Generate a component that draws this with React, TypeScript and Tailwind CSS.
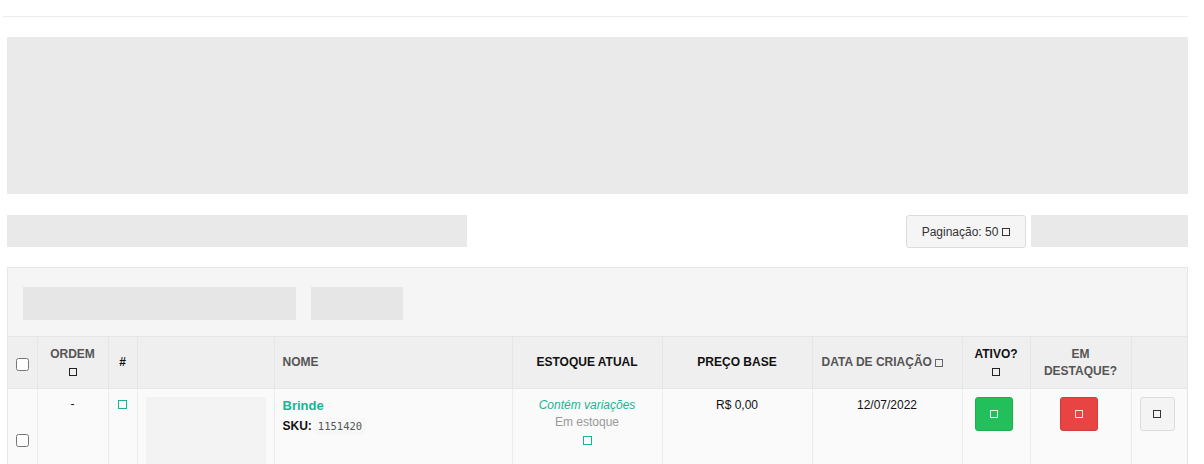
import React from "react";

function Tofu({ className = "" }: { className?: string }) {
    return (
        <span
            className={`inline-block w-[8px] h-[8px] border-[1.5px] border-current align-[-1px] ${className}`}
        />
    );
}

const cols = [29, 71, 29, 137, 238, 150, 150, 150, 68, 101, 56];

export default function App() {
    return (
        <div
            className="min-h-screen bg-white text-[12px] text-[#333]"
            style={{ fontFamily: '"Liberation Sans", Arial, sans-serif' }}
        >
            <div className="pl-[3px] pr-[16px] pt-[16px]">
                <div className="h-px bg-[#ececec]" />
            </div>

            <div className="pl-[7px] pr-[16px]">
                {/* Banner placeholder */}
                <div className="mt-[20px] h-[157px] bg-[#eaeaea]" />

                {/* Toolbar */}
                <div className="mt-[21px] flex items-start">
                    <div className="w-[460px] h-[32px] bg-[#e9e9e9]" />
                    <div className="flex-1" />
                    <button className="h-[33px] w-[120px] rounded-[3px] border border-[#dcdcdc] bg-[#f5f5f5] text-[12px] text-[#333] flex items-center justify-center gap-[4px]">
                        Paginação: 50 <Tofu />
                    </button>
                    <div className="ml-[5px] w-[157px] h-[32px] bg-[#e9e9e9]" />
                </div>

                {/* Panel */}
                <div className="mt-[19px] border border-[#e6e6e6] bg-[#f5f5f5]">
                    <div className="flex gap-[15px] px-[15px] pt-[19px] pb-[16px]">
                        <div className="w-[273px] h-[33px] bg-[#e6e6e6]" />
                        <div className="w-[92px] h-[33px] bg-[#e6e6e6]" />
                    </div>

                    <table className="w-full table-fixed border-collapse">
                        <colgroup>
                            {cols.map((w, i) => (
                                <col key={i} style={{ width: w }} />
                            ))}
                        </colgroup>
                        <thead>
                            <tr className="bg-[#efefef] h-[52px] text-[12px] font-bold leading-[17px]">
                                <th className="border border-[#e6e6e6] border-l-0 text-center align-middle">
                                    <input type="checkbox" className="m-0 mt-[3px] align-middle" />
                                </th>
                                <th className="border border-[#e6e6e6] text-center text-[#555]">
                                    ORDEM
                                    <br />
                                    <Tofu className="text-[#222]" />
                                </th>
                                <th className="border border-[#e6e6e6] text-center text-[#111]">#</th>
                                <th className="border border-[#e6e6e6]" />
                                <th className="border border-[#e6e6e6] text-left pl-[8px] text-[#555]">NOME</th>
                                <th className="border border-[#e6e6e6] text-center text-[#111]">ESTOQUE ATUAL</th>
                                <th className="border border-[#e6e6e6] text-center text-[#111]">PREÇO BASE</th>
                                <th className="border border-[#e6e6e6] text-left pl-[9px] text-[#555]">
                                    DATA DE CRIAÇÃO <Tofu className="text-[#666]" />
                                </th>
                                <th className="border border-[#e6e6e6] text-center text-[#111]">
                                    ATIVO?
                                    <br />
                                    <Tofu className="text-[#222]" />
                                </th>
                                <th className="border border-[#e6e6e6] text-center text-[#555]">
                                    EM
                                    <br />
                                    DESTAQUE?
                                </th>
                                <th className="border border-[#e6e6e6] border-r-0" />
                            </tr>
                        </thead>
                        <tbody>
                            <tr className="bg-[#fafafa] text-[12px] leading-[17px]">
                                <td className="border border-[#ececec] border-l-0 text-center align-middle">
                                    <input type="checkbox" className="m-0 align-middle" />
                                </td>
                                <td className="border border-[#ececec] text-center align-top pt-[7px] text-[#111]">-</td>
                                <td className="border border-[#ececec] text-center align-top pt-[7px] text-[#1ab394]">
                                    <Tofu className="w-[9px] h-[9px]" />
                                </td>
                                <td className="border border-[#ececec] align-top p-[8px]">
                                    <div className="w-[120px] h-[86px] bg-[#f3f3f3]" />
                                </td>
                                <td className="border border-[#ececec] align-top pl-[8px] pt-[8px]">
                                    <div className="text-[13px] font-bold text-[#1ab394]">Brinde</div>
                                    <div className="mt-[4px] flex items-center gap-[2px]">
                                        <span className="font-bold text-[#111]">SKU:</span>
                                        <span
                                            className="px-[4px] rounded-[3px] bg-[#f7f7f7] text-[10.5px] text-[#555]"
                                            style={{ fontFamily: '"DejaVu Sans Mono", "Liberation Mono", monospace' }}
                                        >
                                            1151420
                                        </span>
                                    </div>
                                </td>
                                <td className="border border-[#ececec] align-top text-center pt-[8px]">
                                    <div className="italic text-[#1ab394]">Contém variações</div>
                                    <div className="text-[#999]">Em estoque</div>
                                    <div className="text-[#1ab394] mt-[1px]">
                                        <Tofu className="w-[9px] h-[9px]" />
                                    </div>
                                </td>
                                <td className="border border-[#ececec] align-top text-center pt-[8px] text-[#111]">R$ 0,00</td>
                                <td className="border border-[#ececec] align-top text-center pt-[8px] text-[#111]">12/07/2022</td>
                                <td className="border border-[#ececec] align-top text-center pt-[8px]">
                                    <button className="w-[38px] h-[34px] rounded-[3px] bg-[#22c05a] border border-[#1fad50] text-white flex items-center justify-center mx-auto -translate-x-[2px]">
                                        <Tofu className="text-[#e6f7ec]" />
                                    </button>
                                </td>
                                <td className="border border-[#ececec] align-top text-center pt-[8px]">
                                    <button className="w-[38px] h-[34px] rounded-[3px] bg-[#e94444] border border-[#d33a3a] text-white flex items-center justify-center mx-auto -translate-x-[2px]">
                                        <Tofu className="text-[#fbe4e4]" />
                                    </button>
                                </td>
                                <td className="border border-[#ececec] border-r-0 align-top pt-[8px]">
                                    <button className="ml-[8px] w-[35px] h-[34px] rounded-[3px] bg-[#f4f4f4] border border-[#dddddd] text-[#333] flex items-center justify-center">
                                        <Tofu />
                                    </button>
                                </td>
                            </tr>
                        </tbody>
                    </table>
                </div>
            </div>
        </div>
    );
}
